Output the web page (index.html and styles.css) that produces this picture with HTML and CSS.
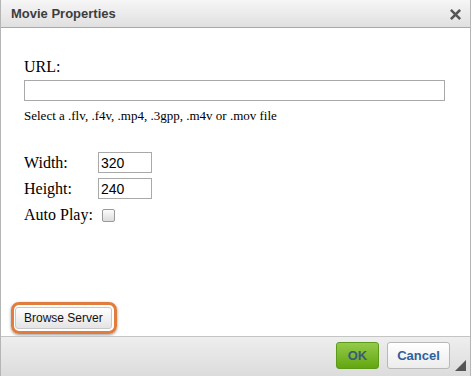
FILE: index.html
```html
<!DOCTYPE html>
<html>
<head>
<meta charset="utf-8">
<link rel="stylesheet" href="styles.css">
</head>
<body>
<div class="dialog">
  <div class="titlebar">
    <span class="title">Movie Properties</span>
    <span class="close">
      <svg width="11" height="11" viewBox="0 0 11 11"><path d="M1.8 1.8 L9.2 9.2 M9.2 1.8 L1.8 9.2" stroke="#555" stroke-width="2.6" stroke-linecap="square"/></svg>
    </span>
  </div>
  <div class="content">
    <div class="url-label">URL:</div>
    <input class="url-input" type="text">
    <div class="hint">Select a .flv, .f4v, .mp4, .3gpp, .m4v or .mov file</div>
    <div class="fields">
      <div class="row"><span class="lbl">Width:</span><input class="num" type="text" value="320"></div>
      <div class="row"><span class="lbl">Height:</span><input class="num" type="text" value="240"></div>
      <div class="row"><span class="lbl lbl-auto">Auto Play:</span><span class="check"></span></div>
    </div>
    <div class="spacer"></div>
    <div class="browse-wrap"><button class="browse">Browse Server</button></div>
  </div>
  <div class="footer">
    <button class="btn ok">OK</button>
    <button class="btn cancel">Cancel</button>
    <span class="resize"></span>
  </div>
</div>
</body>
</html>
```
FILE: styles.css
```css
html, body {
  margin: 0;
  padding: 0;
  background: #fff;
}
.dialog {
  width: 469px;
  height: 376px;
  border-left: 1px solid #b5b5b5;
  border-right: 1px solid #b5b5b5;
  display: flex;
  flex-direction: column;
  box-sizing: content-box;
}
.titlebar {
  height: 27px;
  border-bottom: 1px solid #a8a8a8;
  background: linear-gradient(#f6f6f6, #e0e0e0);
  display: flex;
  align-items: center;
  justify-content: space-between;
  padding: 0 9px 0 10px;
}
.title {
  font-family: "Liberation Sans", Arial, sans-serif;
  font-weight: bold;
  font-size: 13px;
  color: #3d3d3d;
}
.close {
  display: flex;
  margin-top: 1px;
}
.content {
  flex: 1;
  display: flex;
  flex-direction: column;
  padding: 30px 24px 0 23px;
  font-family: "Liberation Serif", "Times New Roman", serif;
  color: #000;
}
.url-label {
  font-size: 16px;
  line-height: 18px;
  height: 22px;
}
.url-input {
  width: 421px;
  height: 21px;
  box-sizing: border-box;
  border: 1px solid #a9a9a9;
  margin: 0;
  padding: 0;
}
.hint {
  font-size: 13px;
  line-height: 15px;
  margin-top: 7px;
}
.fields {
  margin-top: 29px;
  display: flex;
  flex-direction: column;
  gap: 5px;
}
.row {
  display: flex;
  align-items: center;
  height: 21px;
}
.lbl {
  font-size: 16px;
  width: 74px;
}
.lbl-auto {
  width: auto;
  margin-right: 9px;
}
.num {
  width: 54px;
  height: 21px;
  box-sizing: border-box;
  border: 1px solid #a9a9a9;
  margin: 0;
  padding: 1px 2px 0;
  font-family: "Liberation Sans", Arial, sans-serif;
  font-size: 14px;
  color: #000;
}
.check {
  width: 11px;
  height: 11px;
  margin-top: 1px;
  border: 1px solid #999;
  border-radius: 2px;
  background: linear-gradient(#fcfcfc, #dcdcdc);
}
.spacer {
  flex: 1;
}
.browse-wrap {
  align-self: flex-start;
  margin: 0 0 2px -13px;
  border: 3px solid #e07d3c;
  border-radius: 8px;
  padding: 2px 2px 2px 1px;
  box-shadow: 0 1px 3px rgba(0,0,0,0.4);
}
.browse {
  display: block;
  font-family: "Liberation Sans", Arial, sans-serif;
  font-size: 12px;
  color: #111;
  height: 22px;
  padding: 0 8px;
  border: 1px solid #c8c8c8;
  border-radius: 3px;
  background: linear-gradient(#ffffff, #e4e4e4);
}
.footer {
  height: 39px;
  border-top: 1px solid #c4c4c4;
  background: linear-gradient(#eeeeee, #dcdcdc);
  display: flex;
  align-items: center;
  justify-content: flex-end;
  padding-right: 20px;
  gap: 8px;
  position: relative;
}
.btn {
  height: 27px;
  font-family: "Liberation Sans", Arial, sans-serif;
  font-weight: bold;
  font-size: 13px;
  border-radius: 3px;
  padding: 0;
  margin-top: -2px;
}
.ok {
  width: 43px;
  color: #3c5a7a;
  background: linear-gradient(#94cb4a, #62a611);
  border: 1px solid #5c9a1a;
}
.cancel {
  width: 63px;
  color: #2e5f9e;
  background: linear-gradient(#ffffff, #ececec);
  border: 1px solid #b8b8b8;
}
.resize {
  position: absolute;
  right: 4px;
  bottom: 5px;
  width: 0;
  height: 0;
  border-left: 11px solid transparent;
  border-bottom: 11px solid #555;
}
```
